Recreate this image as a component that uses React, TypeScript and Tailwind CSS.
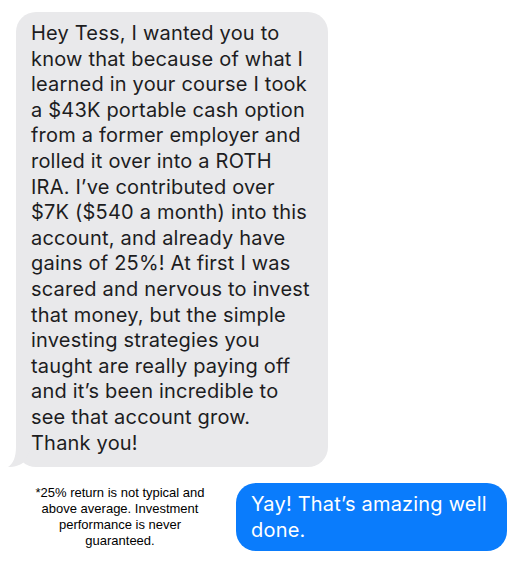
const lines = [
  'Hey Tess, I wanted you to',
  'know that because of what I',
  'learned in your course I took',
  'a $43K portable cash option',
  'from a former employer and',
  'rolled it over into a ROTH',
  'IRA. I’ve contributed over',
  '$7K ($540 a month) into this',
  'account, and already have',
  'gains of 25%! At first I was',
  'scared and nervous to invest',
  'that money, but the simple',
  'investing strategies you',
  'taught are really paying off',
  'and it’s been incredible to',
  'see that account grow.',
  'Thank you!',
];

export default function App() {
  return (
    <div className="w-[524px] h-[564px] bg-white font-['Inter',sans-serif]">
      <div className="pt-3 pl-4">
        <div className="relative w-[312px]">
          <div className="rounded-[20px] bg-[#e9e9eb] pl-[15px] pr-2 pt-[9px] pb-[11px] text-[20px] leading-[25.6px] text-[#1d1d1f] tracking-[0.2px] whitespace-nowrap">
            {lines.map((l) => (
              <div key={l}>{l}</div>
            ))}
          </div>
          <svg className="absolute -left-2 bottom-0" width="24" height="20" viewBox="0 0 24 20">
            <path d="M8 0 C8 10 5 17 0 20 C7 20 13 18 17 14 L24 0 Z" fill="#e9e9eb" />
          </svg>
        </div>
      </div>
      <div className="flex items-start mt-4">
        <p className="w-[236px] pl-1 pt-[2px] text-center text-[13px] leading-4 text-black font-['Liberation_Sans',sans-serif] whitespace-nowrap">
          *25% return is not typical and<br />above average. Investment<br />performance is never<br />guaranteed.
        </p>
        <div className="w-[271px] rounded-[20px] bg-[#0a7cfc] pl-[15px] pr-3 pt-[9px] pb-[8px] text-[20px] leading-[25.6px] text-white tracking-[0.2px]">
          Yay! That’s amazing well<br />done.
        </div>
      </div>
    </div>
  );
}
